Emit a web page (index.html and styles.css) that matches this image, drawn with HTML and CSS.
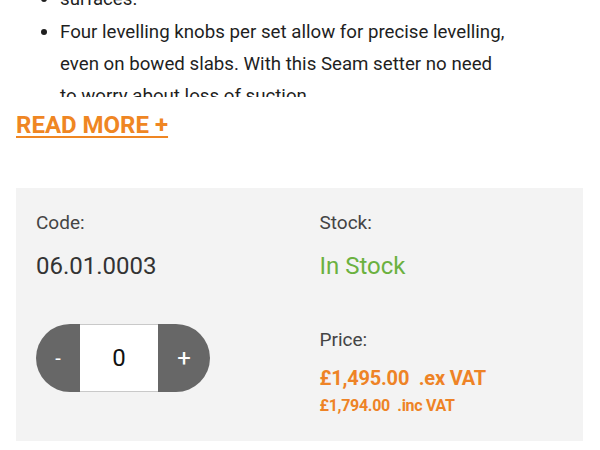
FILE: index.html
```html
<!DOCTYPE html>
<html lang="en">
<head>
<meta charset="utf-8">
<title>Seam setter</title>
<link rel="stylesheet" href="styles.css">
</head>
<body>
<main class="page">
  <div class="desc">
    <ul class="features">
      <li>surfaces.</li>
      <li>Four levelling knobs per set allow for precise levelling, even on bowed slabs. With this Seam setter no need to worry about loss of suction.</li>
    </ul>
  </div>
  <a class="read-more" href="#">READ MORE +</a>
  <section class="panel">
    <div class="col">
      <div class="label">Code:</div>
      <div class="value">06.01.0003</div>
      <div class="stepper">
        <button class="step step-minus" type="button">-</button>
        <div class="qty">0</div>
        <button class="step step-plus" type="button">+</button>
      </div>
    </div>
    <div class="col">
      <div class="label">Stock:</div>
      <div class="value stock">In Stock</div>
      <div class="label price-label">Price:</div>
      <div class="price-ex">£1,495.00&nbsp; .ex VAT</div>
      <div class="price-inc">£1,794.00&nbsp; .inc VAT</div>
    </div>
  </section>
</main>
</body>
</html>
```
FILE: styles.css
```css
* { box-sizing: border-box; }
html, body { margin: 0; padding: 0; background: #fff; }
body {
  font-family: Roboto, "Liberation Sans", sans-serif;
  color: #222;
  width: 600px;
  height: 450px;
  overflow: hidden;
}
.page {
  padding: 0 17px 0 16px;
}
.desc {
  height: 97px;
  overflow: hidden;
}
.features {
  margin: -18px 76px 0 0;
  padding: 0 0 0 44px;
  font-size: 18.7px;
  line-height: 32px;
  color: #1f1f1f;
}
.features li::marker { font-size: 20px; }
.read-more {
  display: inline-block;
  margin-top: 14px;
  font-size: 24px;
  line-height: 28px;
  font-weight: 700;
  color: #ef8623;
  text-decoration: underline;
  text-decoration-thickness: 2px;
  text-underline-offset: 3px;
}
.panel {
  margin-top: 49px;
  background: #f3f3f3;
  height: 253px;
  padding: 23px 20px 0 20px;
  display: grid;
  grid-template-columns: 1fr 1fr;
  column-gap: 40px;
}
.col { display: flex; flex-direction: column; align-items: flex-start; }
.label {
  font-size: 19px;
  line-height: 24px;
  color: #444;
}
.value {
  margin-top: 16px;
  font-size: 24px;
  line-height: 30px;
  color: #333;
}
.stock { color: #6bb13f; }
.stepper {
  margin-top: 43px;
  display: flex;
  height: 68px;
  width: 174px;
}
.step {
  border: 0;
  margin: 0;
  padding: 0;
  background: #676767;
  color: #fff;
  font-family: inherit;
  font-size: 20px;
}
.step-minus { width: 44px; border-radius: 34px 0 0 34px; }
.step-plus { width: 52px; border-radius: 0 34px 34px 0; font-size: 24px; }
.qty {
  width: 78px;
  background: #fff;
  border-top: 1px solid #c9c9c9;
  border-bottom: 1px solid #c9c9c9;
  display: flex;
  align-items: center;
  justify-content: center;
  font-size: 24px;
  color: #111;
}
.price-label { margin-top: 47px; }
.price-ex {
  margin-top: 14px;
  font-size: 20px;
  line-height: 24px;
  font-weight: 700;
  color: #ee8326;
  letter-spacing: -0.2px;
}
.price-inc {
  margin-top: 6px;
  font-size: 16px;
  line-height: 20px;
  font-weight: 700;
  color: #ee8326;
  letter-spacing: -0.3px;
}
```
